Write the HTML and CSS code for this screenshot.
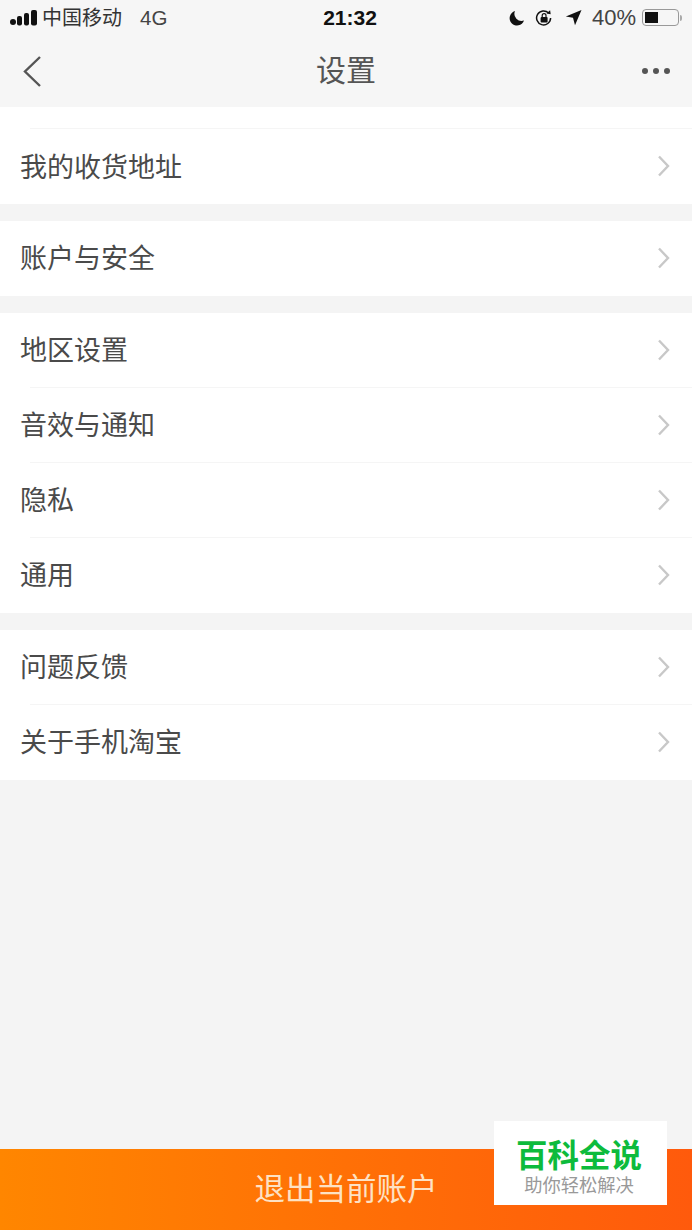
FILE: index.html
```html
<!DOCTYPE html>
<html lang="zh">
<head>
<meta charset="utf-8">
<title>设置</title>
<link rel="stylesheet" href="styles.css">
</head>
<body>
<div class="page">
	<div class="status">
		<div class="status_left">
			<svg class="signal" width="27" height="16" viewBox="0 0 27 16">
				<circle cx="3" cy="12" r="3" fill="#111"/>
				<rect x="7" y="6" width="5" height="9.6" rx="2" fill="#111"/>
				<rect x="14" y="3" width="5" height="12.6" rx="2" fill="#111"/>
				<rect x="21" y="0" width="6" height="15.6" rx="2" fill="#111"/>
			</svg>
			<span class="carrier">中国移动</span>
			<span class="net">4G</span>
		</div>
		<div class="clock">21:32</div>
		<div class="status_right">
			<svg class="moon" width="16" height="16" viewBox="0 0 16 16"><path d="M6 1a7.4 7.4 0 1 0 9 9.6A7.2 7.2 0 0 1 6 1z" fill="#111"/></svg>
			<svg class="lock" width="19" height="18" viewBox="0 0 19 18">
				<path d="M15.6 9a7 7 0 1 1-2-5" fill="none" stroke="#111" stroke-width="1.5"/>
				<path d="M11.5 4.6l4.2.6-.6-4z" fill="#111"/>
				<rect x="5.6" y="8" width="7" height="5.4" rx="1" fill="#111"/>
				<path d="M7.2 8V6.6a1.9 1.9 0 0 1 3.8 0V8" fill="none" stroke="#111" stroke-width="1.2"/>
			</svg>
			<svg class="arrow" width="17" height="17" viewBox="0 0 17 17"><path d="M16.5 1L0.8 7.6l7.2 1.2 2 7.4z" fill="#111"/></svg>
			<span class="percent">40%</span>
			<div class="battery"><div class="battery_fill"></div></div>
			<div class="battery_tip"></div>
		</div>
	</div>

	<div class="nav">
		<svg class="back" width="20" height="32" viewBox="0 0 20 32"><path d="M18 2L3 16.5 18 31" fill="none" stroke="#555" stroke-width="2.4"/></svg>
		<div class="nav_title">设置</div>
		<div class="more"><i></i><i></i><i></i></div>
	</div>

	<div class="group group_first">
		<div class="row"><span class="row_text">我的收货地址</span><svg class="chev" width="13" height="22" viewBox="0 0 13 22"><path d="M2 1.5L11 11 2 20.5" fill="none" stroke="#c8c8c8" stroke-width="2.4"/></svg></div>
	</div>
	<div class="group">
		<div class="row"><span class="row_text">账户与安全</span><svg class="chev" width="13" height="22" viewBox="0 0 13 22"><path d="M2 1.5L11 11 2 20.5" fill="none" stroke="#c8c8c8" stroke-width="2.4"/></svg></div>
	</div>
	<div class="group">
		<div class="row"><span class="row_text">地区设置</span><svg class="chev" width="13" height="22" viewBox="0 0 13 22"><path d="M2 1.5L11 11 2 20.5" fill="none" stroke="#c8c8c8" stroke-width="2.4"/></svg></div>
		<div class="row"><span class="row_text">音效与通知</span><svg class="chev" width="13" height="22" viewBox="0 0 13 22"><path d="M2 1.5L11 11 2 20.5" fill="none" stroke="#c8c8c8" stroke-width="2.4"/></svg></div>
		<div class="row"><span class="row_text">隐私</span><svg class="chev" width="13" height="22" viewBox="0 0 13 22"><path d="M2 1.5L11 11 2 20.5" fill="none" stroke="#c8c8c8" stroke-width="2.4"/></svg></div>
		<div class="row"><span class="row_text">通用</span><svg class="chev" width="13" height="22" viewBox="0 0 13 22"><path d="M2 1.5L11 11 2 20.5" fill="none" stroke="#c8c8c8" stroke-width="2.4"/></svg></div>
	</div>
	<div class="group">
		<div class="row"><span class="row_text">问题反馈</span><svg class="chev" width="13" height="22" viewBox="0 0 13 22"><path d="M2 1.5L11 11 2 20.5" fill="none" stroke="#c8c8c8" stroke-width="2.4"/></svg></div>
		<div class="row"><span class="row_text">关于手机淘宝</span><svg class="chev" width="13" height="22" viewBox="0 0 13 22"><path d="M2 1.5L11 11 2 20.5" fill="none" stroke="#c8c8c8" stroke-width="2.4"/></svg></div>
	</div>

	<div class="logout"><span class="logout_text">退出当前账户</span></div>

	<div class="mark">
		<div class="mark_title">百科全说</div>
		<div class="mark_sub">助你轻松解决</div>
	</div>
</div>
</body>
</html>
```

FILE: styles.css
```css
html, body {margin:0; padding:0;}
body {background:#f4f4f4; font-family:"Noto Sans CJK SC","Liberation Sans",sans-serif;}
.page {position:relative; width:692px; height:1230px; overflow:hidden; display:flex; flex-direction:column; background:#f4f4f4;}

.status {height:35px; display:grid; grid-template-columns:1fr auto 1fr; align-items:center; background:#f6f6f6; color:#222; font-family:"Liberation Sans",sans-serif;}
.status_left {display:flex; align-items:center; padding-left:10px;}
.signal {margin-right:5px;}
.carrier {font-family:"Noto Sans CJK SC",sans-serif; font-size:20px; line-height:24px; color:#333; margin-bottom:1px;}
.net {margin-left:18px; color:#444; font-size:20.5px;}
.clock {font-weight:bold; font-size:21px; color:#111; padding-left:8px;}
.status_right {display:flex; align-items:center; justify-content:flex-end; padding-right:10px;}
.moon {margin-right:10px;}
.lock {margin-right:11px;}
.arrow {margin-right:10px;}
.percent {color:#444; font-size:22px; margin-right:6px;}
.battery {width:31px; height:11px; border:1.5px solid #999; border-radius:4px; padding:2px;}
.battery_fill {width:13px; height:11px; background:#111;}
.battery_tip {width:2px; height:6px; margin-left:1px; background:#aaa; border-radius:0 2px 2px 0;}

.nav {height:72px; display:grid; grid-template-columns:1fr auto 1fr; align-items:center; background:#f6f6f6; padding:0 22px;}
.back {margin-bottom:1px;}
.nav_title {font-size:30px; line-height:40px; color:#555; margin-bottom:6px;}
.more {display:flex; gap:5px; justify-content:flex-end;}
.more i {display:block; width:6px; height:6px; border-radius:50%; background:#555;}

.group {margin-top:17px; background:#fff;}
.group_first {margin-top:0; padding:21px 0 1px; background:linear-gradient(#f5f5f5,#f5f5f5) 30px 21px/100% 1px no-repeat #fff;}
.row {height:75px; box-sizing:border-box; display:flex; align-items:center; justify-content:space-between; padding:0 22px 0 20px; font-size:27px; color:#4a4a4a; background:linear-gradient(#f5f5f5,#f5f5f5) 30px 100%/100% 1px no-repeat;}
.row:last-child {background:none;}
.row_text {margin-bottom:5px;}
.chev {margin-bottom:2px;}
.group_first .row_text {margin-bottom:1px;}
.group_first .chev {margin-bottom:0;}

.logout {margin-top:auto; height:81px; display:flex; align-items:center; justify-content:center; color:#fde2c4; font-size:30.5px; background:linear-gradient(to right,#ff8600,#ff5a0c);}
.logout_text {margin-bottom:5px;}

.mark {position:absolute; left:494px; top:1121px; width:173px; height:84px; background:#fff; text-align:center;}
.mark_title {font-size:31.5px; line-height:36px; margin-top:14px; padding-right:3px; font-weight:bold; color:#0dbb3c;}
.mark_sub {font-size:18.3px; line-height:22px; margin-top:2px; padding-right:3px; color:#999;}
```
